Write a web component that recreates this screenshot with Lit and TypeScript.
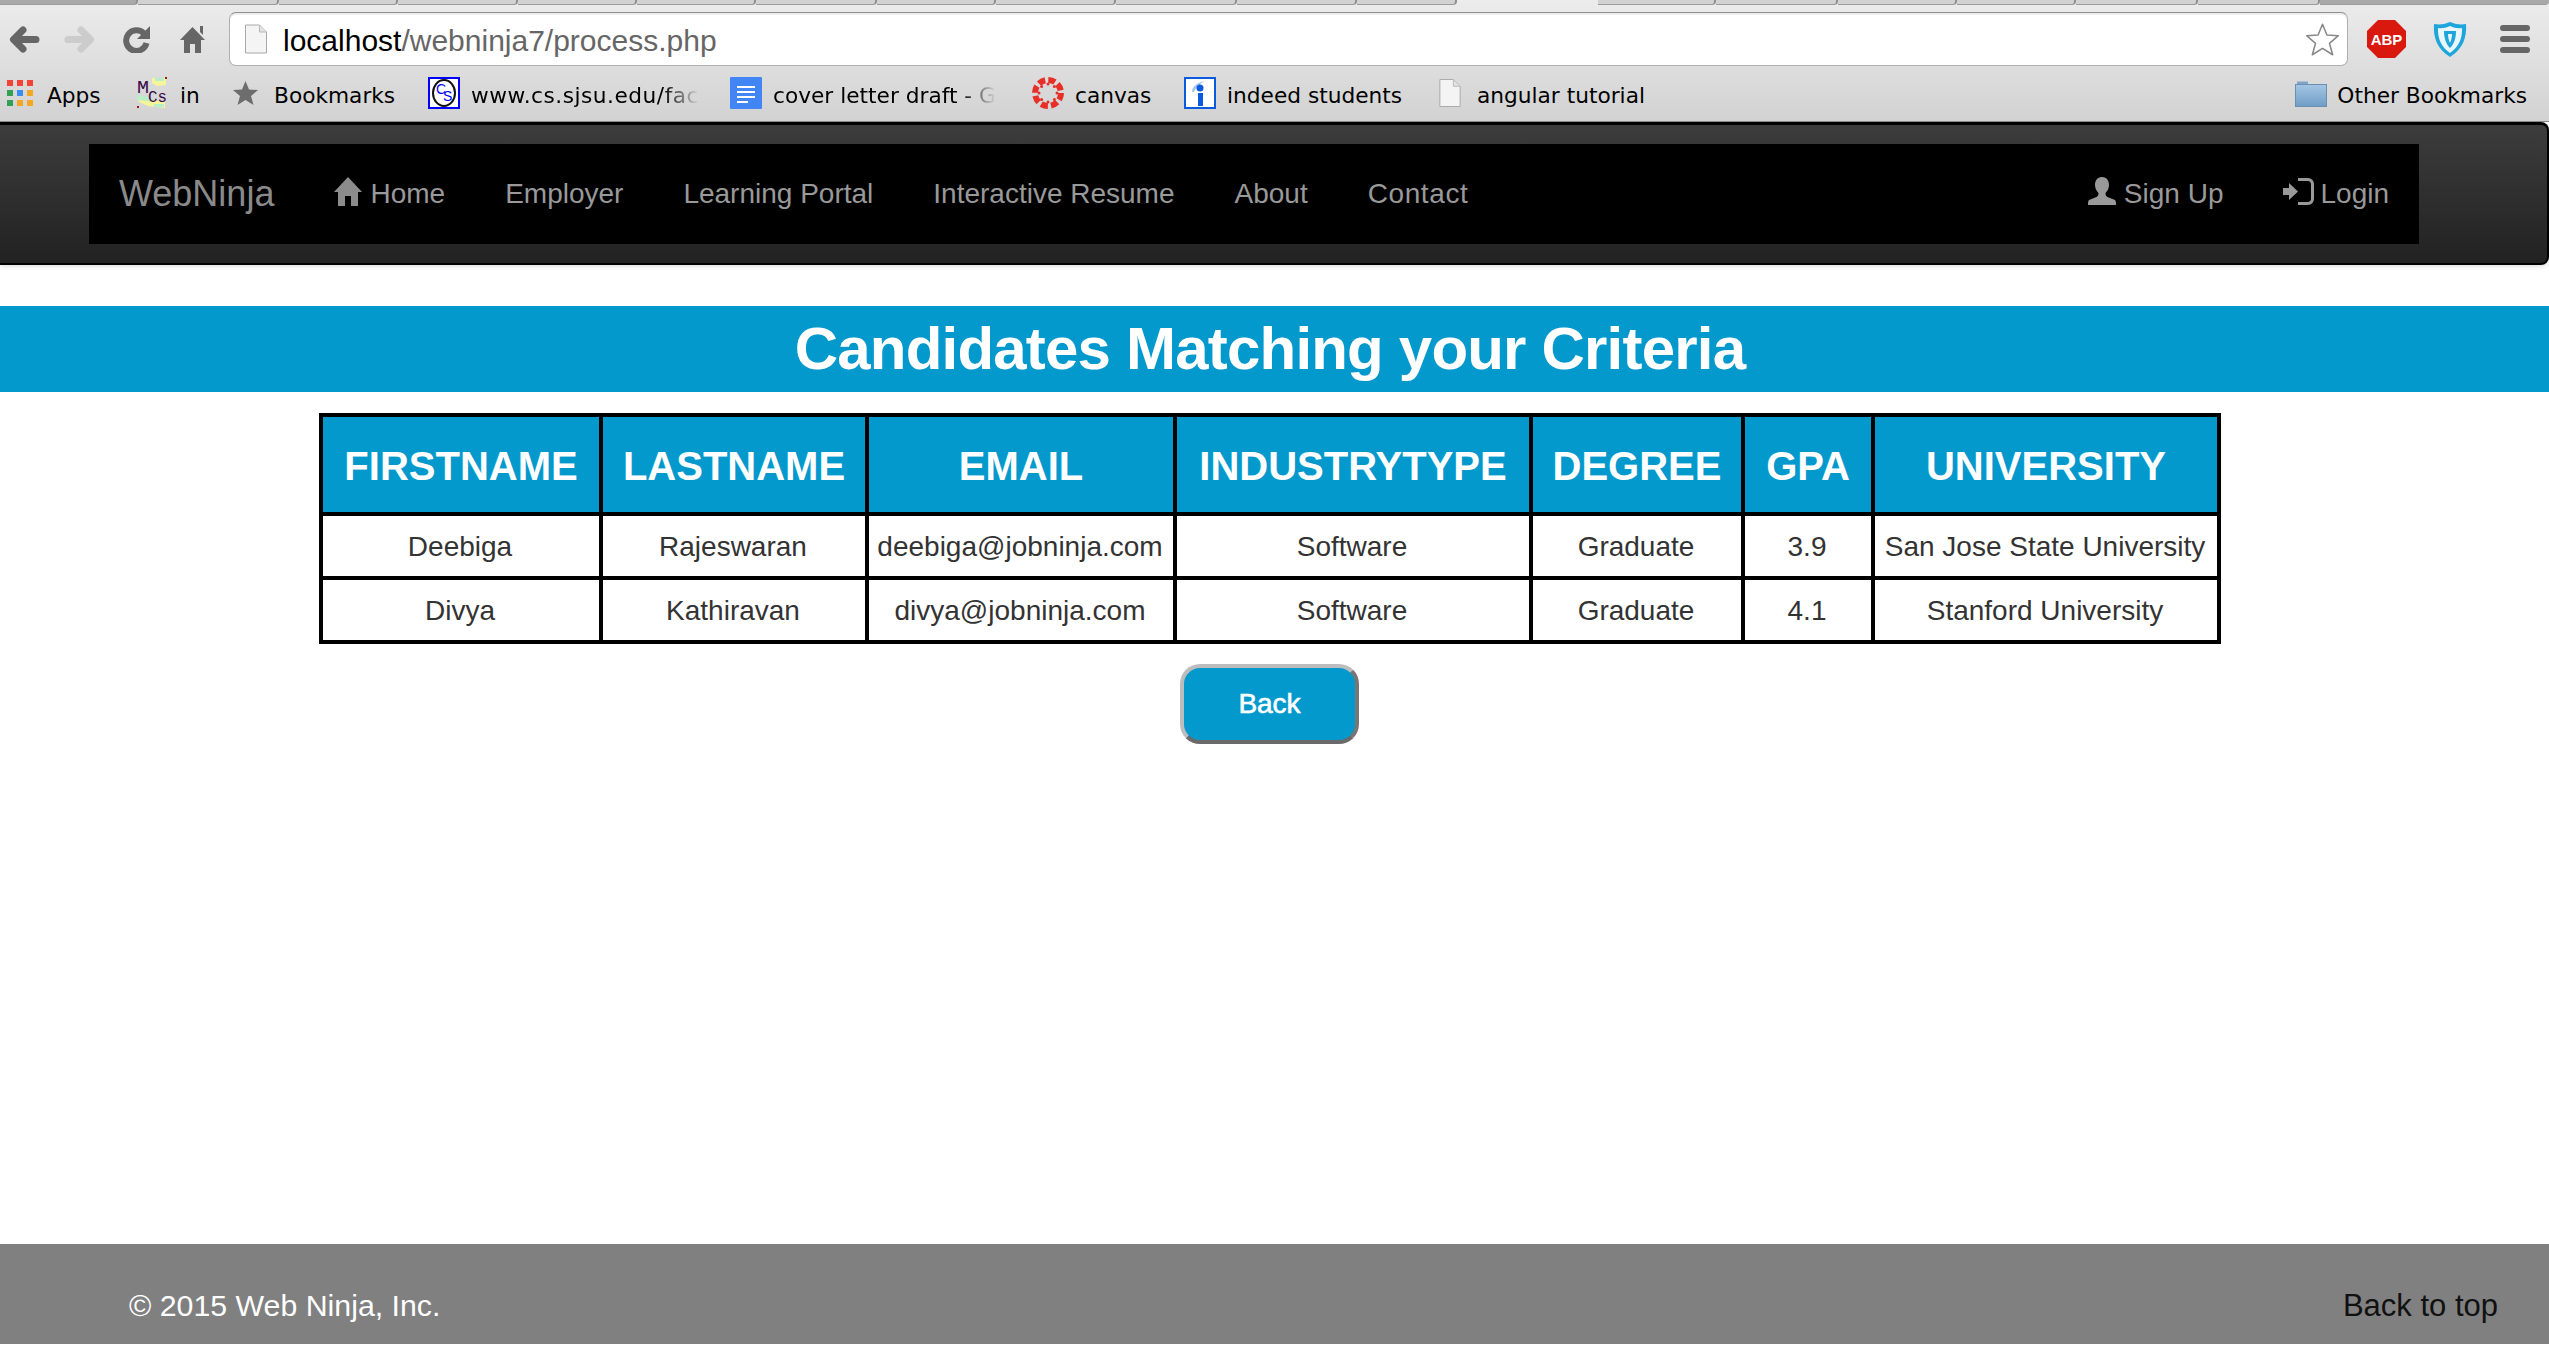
import { LitElement, html, css } from 'lit';
import { customElement } from 'lit/decorators.js';

const TAB_WIDTHS = [138, 141, 119, 120, 119, 119, 121, 119, 120, 121, 120, 100, 141, 118, 122, 119, 119, 122, 122];
const ACTIVE_TAB = 12;
const COLUMN_WIDTHS = [280, 266, 308, 356, 212, 130, 346];
const COLUMNS = ['FIRSTNAME', 'LASTNAME', 'EMAIL', 'INDUSTRYTYPE', 'DEGREE', 'GPA', 'UNIVERSITY'];
const ROWS = [
  ['Deebiga', 'Rajeswaran', 'deebiga@jobninja.com', 'Software', 'Graduate', '3.9', 'San Jose State University'],
  ['Divya', 'Kathiravan', 'divya@jobninja.com', 'Software', 'Graduate', '4.1', 'Stanford University'],
];

const fileIcon = (w: number, h: number) => html`
  <svg width=${w} height=${h} viewBox="0 0 22 29">
    <path d="M.5.5h14l7 7v21H.5z" fill="#f4f4f4" stroke="#a8a8a8"/>
    <path d="M14.5.5v7h7" fill="#e2e2e2" stroke="#b8b8b8"/>
  </svg>`;

@customElement('browser-chrome')
class BrowserChrome extends LitElement {
  static styles = css`
    :host {
      display: block;
      height: 122px;
      box-sizing: border-box;
      background: linear-gradient(#ececec, #d2d2d2);
      border-bottom: 1px solid #8a8a8a;
      font-family: "Liberation Sans", Arial, sans-serif;
    }
    .tabs {
      display: flex;
      height: 5px;
    }
    .tab {
      flex: none;
      box-sizing: border-box;
      background: #d2d2d2;
      border-right: 2px solid #8f8f8f;
      border-bottom: 1px solid #9c9c9c;
      border-bottom-right-radius: 4px;
    }
    .tab.dark { background: #a9a9a9; }
    .tab.active { background: transparent; border: none; }
    .tab.rest { flex: 1; background: #a9a9a9; border-right: none; }
    .toolbar {
      display: flex;
      align-items: center;
      height: 54px;
      margin-top: 7px;
    }
    .back { margin-left: 9px; }
    .forward { margin-left: 24px; }
    .reload { margin-left: 28px; }
    .home { margin-left: 30px; }
    .address {
      display: flex;
      align-items: center;
      box-sizing: border-box;
      width: 2119px;
      height: 54px;
      margin-left: 24px;
      padding: 0 7px 0 15px;
      background: #fff;
      border: 1px solid #b0b0b0;
      border-top-color: #8e8e8e;
      border-radius: 7px;
      box-shadow: inset 0 2px 1px #eee;
      font-size: 30px;
      color: #666;
    }
    .address svg:first-child { margin-right: 16px; }
    .address span { padding-top: 3px; }
    .address b { font-weight: normal; color: #000; }
    .address .star { margin-left: auto; }
    .abp { margin-left: 19px; }
    .shield { margin-left: 27px; }
    .menu {
      display: flex;
      flex-direction: column;
      gap: 5px;
      width: 30px;
      margin-left: 33px;
    }
    .menu span {
      height: 6px;
      border-radius: 3px;
      background: #666;
    }
    .bookmarks {
      display: flex;
      align-items: center;
      height: 32px;
      margin-top: 13px;
      padding: 0 22px 0 7px;
      font-family: "DejaVu Sans", sans-serif;
      font-size: 21.7px;
      color: #000;
    }
    .bookmark {
      display: flex;
      align-items: center;
      flex: none;
      white-space: nowrap;
    }
    .bookmark svg, .apps { margin-top: -4px; }
    .fade {
      -webkit-mask-image: linear-gradient(to right, #000 84%, transparent);
      mask-image: linear-gradient(to right, #000 84%, transparent);
    }
    .fade.url { letter-spacing: 0.5px; }
    .other { margin-left: auto; }
    .apps {
      display: grid;
      grid-template-columns: repeat(3, 6px);
      gap: 4px;
    }
    .apps i { height: 6px; }
    .r { background: #f44336; }
    .g { background: #34a056; }
    .b { background: #3b8ef0; }
    .o { background: #f5a623; }
  `;

  render () {
    return html`
      <div class="tabs">
        ${TAB_WIDTHS.map((w, i) => html`
          <div class="tab ${i === 0 ? 'dark' : ''} ${i === ACTIVE_TAB ? 'active' : ''}" style="width:${w}px"></div>`)}
        <div class="tab rest"></div>
      </div>
      <div class="toolbar">
        <svg class="back" width="31" height="27" viewBox="0 0 31 27" fill="none" stroke="#666" stroke-width="7" stroke-linecap="round" stroke-linejoin="round"><path d="M27 13.5H5M14 4l-9.500 9.500L14 23"/></svg>
        <svg class="forward" width="31" height="27" viewBox="0 0 31 27" fill="none" stroke="#ccc" stroke-width="7" stroke-linecap="round" stroke-linejoin="round"><path d="M4 13.500h22M17 4l9.500 9.500L17 23"/></svg>
        <svg class="reload" width="27" height="27" viewBox="0 0 27 27"><path d="M21 7.500A10.300 10.300 0 1 0 23.500 17" fill="none" stroke="#666" stroke-width="6"/><path d="M27 0v13H14z" fill="#666"/></svg>
        <svg class="home" width="25" height="27" viewBox="0 0 25 27" fill="#666"><path d="M12.500 1L25 14h-4v13h-6v-9h-5v9H4V14H0z"/><path d="M20 0h3v9l-3-3z"/></svg>
        <div class="address">
          ${fileIcon(22, 30)}
          <span><b>localhost</b>/webninja7/process.php</span>
          <svg class="star" width="35" height="33" viewBox="-1 -1 27 26"><path d="M12.500 0L16 8.500l9 .5-7 6 2.500 9-8-5-8 5L7 15 0 9l9-.5z" fill="#fff" stroke="#888" stroke-width="1.200" stroke-linejoin="round"/></svg>
        </div>
        <svg class="abp" width="39" height="38" viewBox="0 0 39 38"><path d="M11 0h17l11 11v16L28 38H11L0 27V11z" fill="#d9190d"/><text x="19.500" y="24.500" text-anchor="middle" font-family="Liberation Sans, sans-serif" font-weight="700" font-size="15" fill="#fff">ABP</text></svg>
        <svg class="shield" width="34" height="37" viewBox="0 0 34 37"><path d="M17 1c6 2.500 11 3 16 2 1 13-3 25-16 33C4 28 0 16 1 3c5 1 10 .5 16-2z" fill="#1ea5dc"/><path d="M17 5c4.500 2 8 2.500 12 2 .5 10-3 19-12 25C8 26 4.500 17 5 7c4 .5 7.500 0 12-2z" fill="#e9f6fb"/><path d="M11 10h12c0 7-2 13-6 17-4-4-6-10-6-17z" fill="#1ea5dc"/><path d="M15 13h4c0 3-.7 6-2 9-1.300-3-2-6-2-9z" fill="#e9f6fb"/></svg>
        <div class="menu"><span></span><span></span><span></span></div>
      </div>
      <div class="bookmarks">
        <div class="bookmark" style="width:129px;gap:14px">
          <div class="apps">
            <i class="r"></i><i class="r"></i><i class="r"></i>
            <i class="g"></i><i class="b"></i><i class="o"></i>
            <i class="g"></i><i class="o"></i><i class="o"></i>
          </div>Apps
        </div>
        <div class="bookmark" style="width:97px;gap:12px">
          <svg width="32" height="32" viewBox="0 0 32 32">
            <path d="M16 1h14v7l-9 1-5-3zM1 19l12 3 16 3v6l-17-2-9-4z" fill="#f6f59a"/>
            <path d="M1 18l11 2 7 5-9-1-9-1zM19 1h9v3h-9zM18 27h10v3H18z" fill="#b9efc8"/>
            <text x="1" y="16" font-family="Liberation Mono, monospace" font-size="19" textLength="12" lengthAdjust="spacingAndGlyphs" fill="#3a0a4a">M</text>
            <text x="12" y="25" font-family="Liberation Mono, monospace" font-size="17" textLength="19" lengthAdjust="spacingAndGlyphs" fill="#3a0a4a">Cs</text>
            <rect x="29" y="0" width="2" height="2" fill="#a01515"/><rect x="1" y="29" width="2" height="2" fill="#a01515"/>
          </svg>in
        </div>
        <div class="bookmark" style="width:195px;gap:16px">
          <svg width="25" height="24" viewBox="0 0 25 24"><path d="M12.500 0L16 8.500l9 .5-7 6 2.500 9-8-5-8 5L7 15 0 9l9-.5z" fill="#6d6d6d"/></svg>Bookmarks
        </div>
        <div class="bookmark" style="width:302px;gap:11px">
          <svg width="32" height="32" viewBox="0 0 32 32">
            <rect x="1" y="1" width="30" height="30" fill="#fff" stroke="#00f" stroke-width="2"/>
            <ellipse cx="16" cy="16" rx="11" ry="13" fill="none" stroke="#111" stroke-width="2"/>
            <text x="8" y="17" font-family="Liberation Sans, sans-serif" font-size="14" fill="#00f">C</text>
            <text x="15" y="24" font-family="Liberation Sans, sans-serif" font-size="14" fill="#00f">S</text>
          </svg>
          <span class="fade url">www.cs.sjsu.edu/fac</span>
        </div>
        <div class="bookmark" style="width:302px;gap:11px">
          <svg width="32" height="32" viewBox="0 0 32 32">
            <rect width="32" height="32" rx="1" fill="#4285f4"/>
            <path d="M7 9h18v2H7zM7 14h18v2H7zM7 19h18v2H7zM7 24h11v2H7z" fill="#fff"/>
          </svg>
          <span class="fade">cover letter draft - G</span>
        </div>
        <div class="bookmark" style="width:152px;gap:11px">
          <svg width="32" height="32" viewBox="0 0 32 32" fill="#e72f27">
            <circle cx="16" cy="16" r="13" fill="none" stroke="#e72f27" stroke-width="6" stroke-dasharray="7 3.200"/>
            <circle cx="16" cy="7" r="1.500"/><circle cx="16" cy="25" r="1.500"/><circle cx="7" cy="16" r="1.500"/><circle cx="25" cy="16" r="1.500"/>
            <circle cx="9.600" cy="9.600" r="1.500"/><circle cx="22.400" cy="9.600" r="1.500"/><circle cx="9.600" cy="22.400" r="1.500"/><circle cx="22.400" cy="22.400" r="1.500"/>
          </svg>canvas
        </div>
        <div class="bookmark" style="width:255px;gap:11px">
          <svg width="32" height="32" viewBox="0 0 32 32">
            <rect x="1" y="1" width="30" height="30" fill="#fff" stroke="#0a5be0" stroke-width="2"/>
            <path d="M8 15c0-5 4-9 13-11-4 2-9 6-11 11z" fill="#a9c3ea"/>
            <circle cx="16" cy="11" r="3.500" fill="#0a5be0"/>
            <rect x="14" y="16" width="5" height="13" fill="#0a5be0"/>
          </svg>indeed students
        </div>
        <div class="bookmark" style="gap:16px">${fileIcon(22, 28)}angular tutorial</div>
        <div class="bookmark other" style="gap:10px">
          <svg width="32" height="27" viewBox="0 0 32 27">
            <defs><linearGradient id="folder" x1="0" y1="0" x2="0" y2="1"><stop offset="0" stop-color="#a5c6e4"/><stop offset="1" stop-color="#6f9dc6"/></linearGradient></defs>
            <path d="M2 5V1.500h11V5z" fill="#7fa6c8"/>
            <rect x=".5" y="4.500" width="31" height="22" fill="url(#folder)" stroke="#6b8fb0"/>
          </svg>Other Bookmarks
        </div>
      </div>
    `;
  }
}

@customElement('app-root')
class AppRoot extends LitElement {
  static styles = css`
    :host {
      display: flex;
      flex-direction: column;
      height: 1348px;
      overflow: hidden;
      background: #fff;
      font-family: "Liberation Sans", Arial, sans-serif;
      font-size: 28px;
      color: #333;
    }
    .navbar {
      flex: none;
      box-sizing: border-box;
      height: 143px;
      padding: 19px 0 0 89px;
      background: linear-gradient(#3c3c3c, #222);
      border-top: 3px solid #000;
      border-bottom: 2px solid #000;
      border-right: 2px solid #000;
      border-radius: 0 8px 8px 0;
      box-shadow: 0 2px 4px rgba(0, 0, 0, 0.12);
    }
    .nav-inner {
      display: flex;
      align-items: center;
      width: 2330px;
      height: 100px;
      background: #000;
    }
    .nav-inner a {
      display: flex;
      align-items: center;
      gap: 8px;
      padding: 0 30px;
      color: #999;
      white-space: nowrap;
    }
    .nav-inner svg { margin-top: -6px; }
    .nav-inner .brand {
      font-size: 36px;
      color: #8a8a8a;
    }
    .nav-inner .contact { letter-spacing: 0.6px; }
    .nav-inner .push { margin-left: auto; }
    .nav-inner .login { gap: 6px; }
    .banner {
      flex: none;
      height: 86px;
      margin-top: 41px;
      padding-right: 9px;
      background: #0499cd;
      color: #fff;
      font-size: 60px;
      font-weight: 700;
      letter-spacing: -0.8px;
      line-height: 86px;
      text-align: center;
    }
    table {
      flex: none;
      box-sizing: border-box;
      width: 1902px;
      margin: 21px 0 0 319px;
      border-collapse: separate;
      border-spacing: 0;
      border-top: 4px solid #000;
      border-left: 4px solid #000;
      table-layout: fixed;
    }
    th, td {
      box-sizing: border-box;
      border-right: 4px solid #000;
      border-bottom: 4px solid #000;
      text-align: center;
      white-space: nowrap;
    }
    th {
      height: 99px;
      padding: 3px 0 0;
      background: #0499cd;
      color: #fff;
      font-size: 40px;
      font-weight: 700;
    }
    td {
      height: 64px;
      padding: 2px 2px 0 0;
    }
    .back-btn {
      flex: none;
      box-sizing: border-box;
      align-self: flex-start;
      width: 179px;
      height: 80px;
      margin: 20px 0 0 1180px;
      background: #0499cd;
      border: 4px solid;
      border-color: #bdbdbd #767676 #6a6a6a #bdbdbd;
      border-radius: 20px;
      color: #fff;
      font: 28px "Liberation Sans", Arial, sans-serif;
      -webkit-text-stroke: 0.6px #fff;
    }
    footer {
      flex: none;
      display: flex;
      justify-content: space-between;
      align-items: baseline;
      box-sizing: border-box;
      height: 100px;
      margin-top: auto;
      margin-bottom: 4px;
      padding: 44px 51px 0 129px;
      background: #808080;
      color: #fff;
      font-size: 30.3px;
    }
    footer a {
      color: #111;
      font-size: 31px;
    }
  `;

  render () {
    return html`
      <browser-chrome></browser-chrome>
      <nav class="navbar">
        <div class="nav-inner">
          <a class="brand">WebNinja</a>
          <a>
            <svg width="28" height="29" viewBox="0 0 28 29" fill="#8c8c8c"><path d="M14 0l14 15h-4v14h-7V19h-6v10H4V15H0z"/></svg>Home
          </a>
          <a>Employer</a>
          <a>Learning Portal</a>
          <a>Interactive Resume</a>
          <a>About</a>
          <a class="contact">Contact</a>
          <a class="push">
            <svg width="28" height="28" viewBox="0 0 28 28" fill="#999"><path d="M14 0c-5 0-7 4-7 8 0 3 1.500 6 3.500 8 0 2-.5 3-2 4L1 23c-1 1-1 3-1 5h28c0-2 0-4-1-5l-7.500-3c-1.500-1-2-2-2-4 2-2 3.500-5 3.500-8 0-4-2-8-7-8z"/></svg>Sign Up
          </a>
          <a class="login">
            <svg width="31" height="27" viewBox="0 0 31 27"><path d="M0 10h6V5l9 8.500L6 22v-5H0z" fill="#999"/><path d="M15 1.500h10A4.500 4.500 0 0 1 29.500 6v15a4.500 4.500 0 0 1-4.500 4.500H15" fill="none" stroke="#999" stroke-width="3"/></svg>Login
          </a>
        </div>
      </nav>
      <div class="banner">Candidates Matching your Criteria</div>
      <table>
        <colgroup>${COLUMN_WIDTHS.map(w => html`<col style="width:${w}px">`)}</colgroup>
        <thead><tr>${COLUMNS.map(c => html`<th>${c}</th>`)}</tr></thead>
        <tbody>
          ${ROWS.map(row => html`<tr>${row.map(v => html`<td>${v}</td>`)}</tr>`)}
        </tbody>
      </table>
      <button class="back-btn">Back</button>
      <footer>
        <span>© 2015 Web Ninja, Inc.</span>
        <a>Back to top</a>
      </footer>
    `;
  }
}
